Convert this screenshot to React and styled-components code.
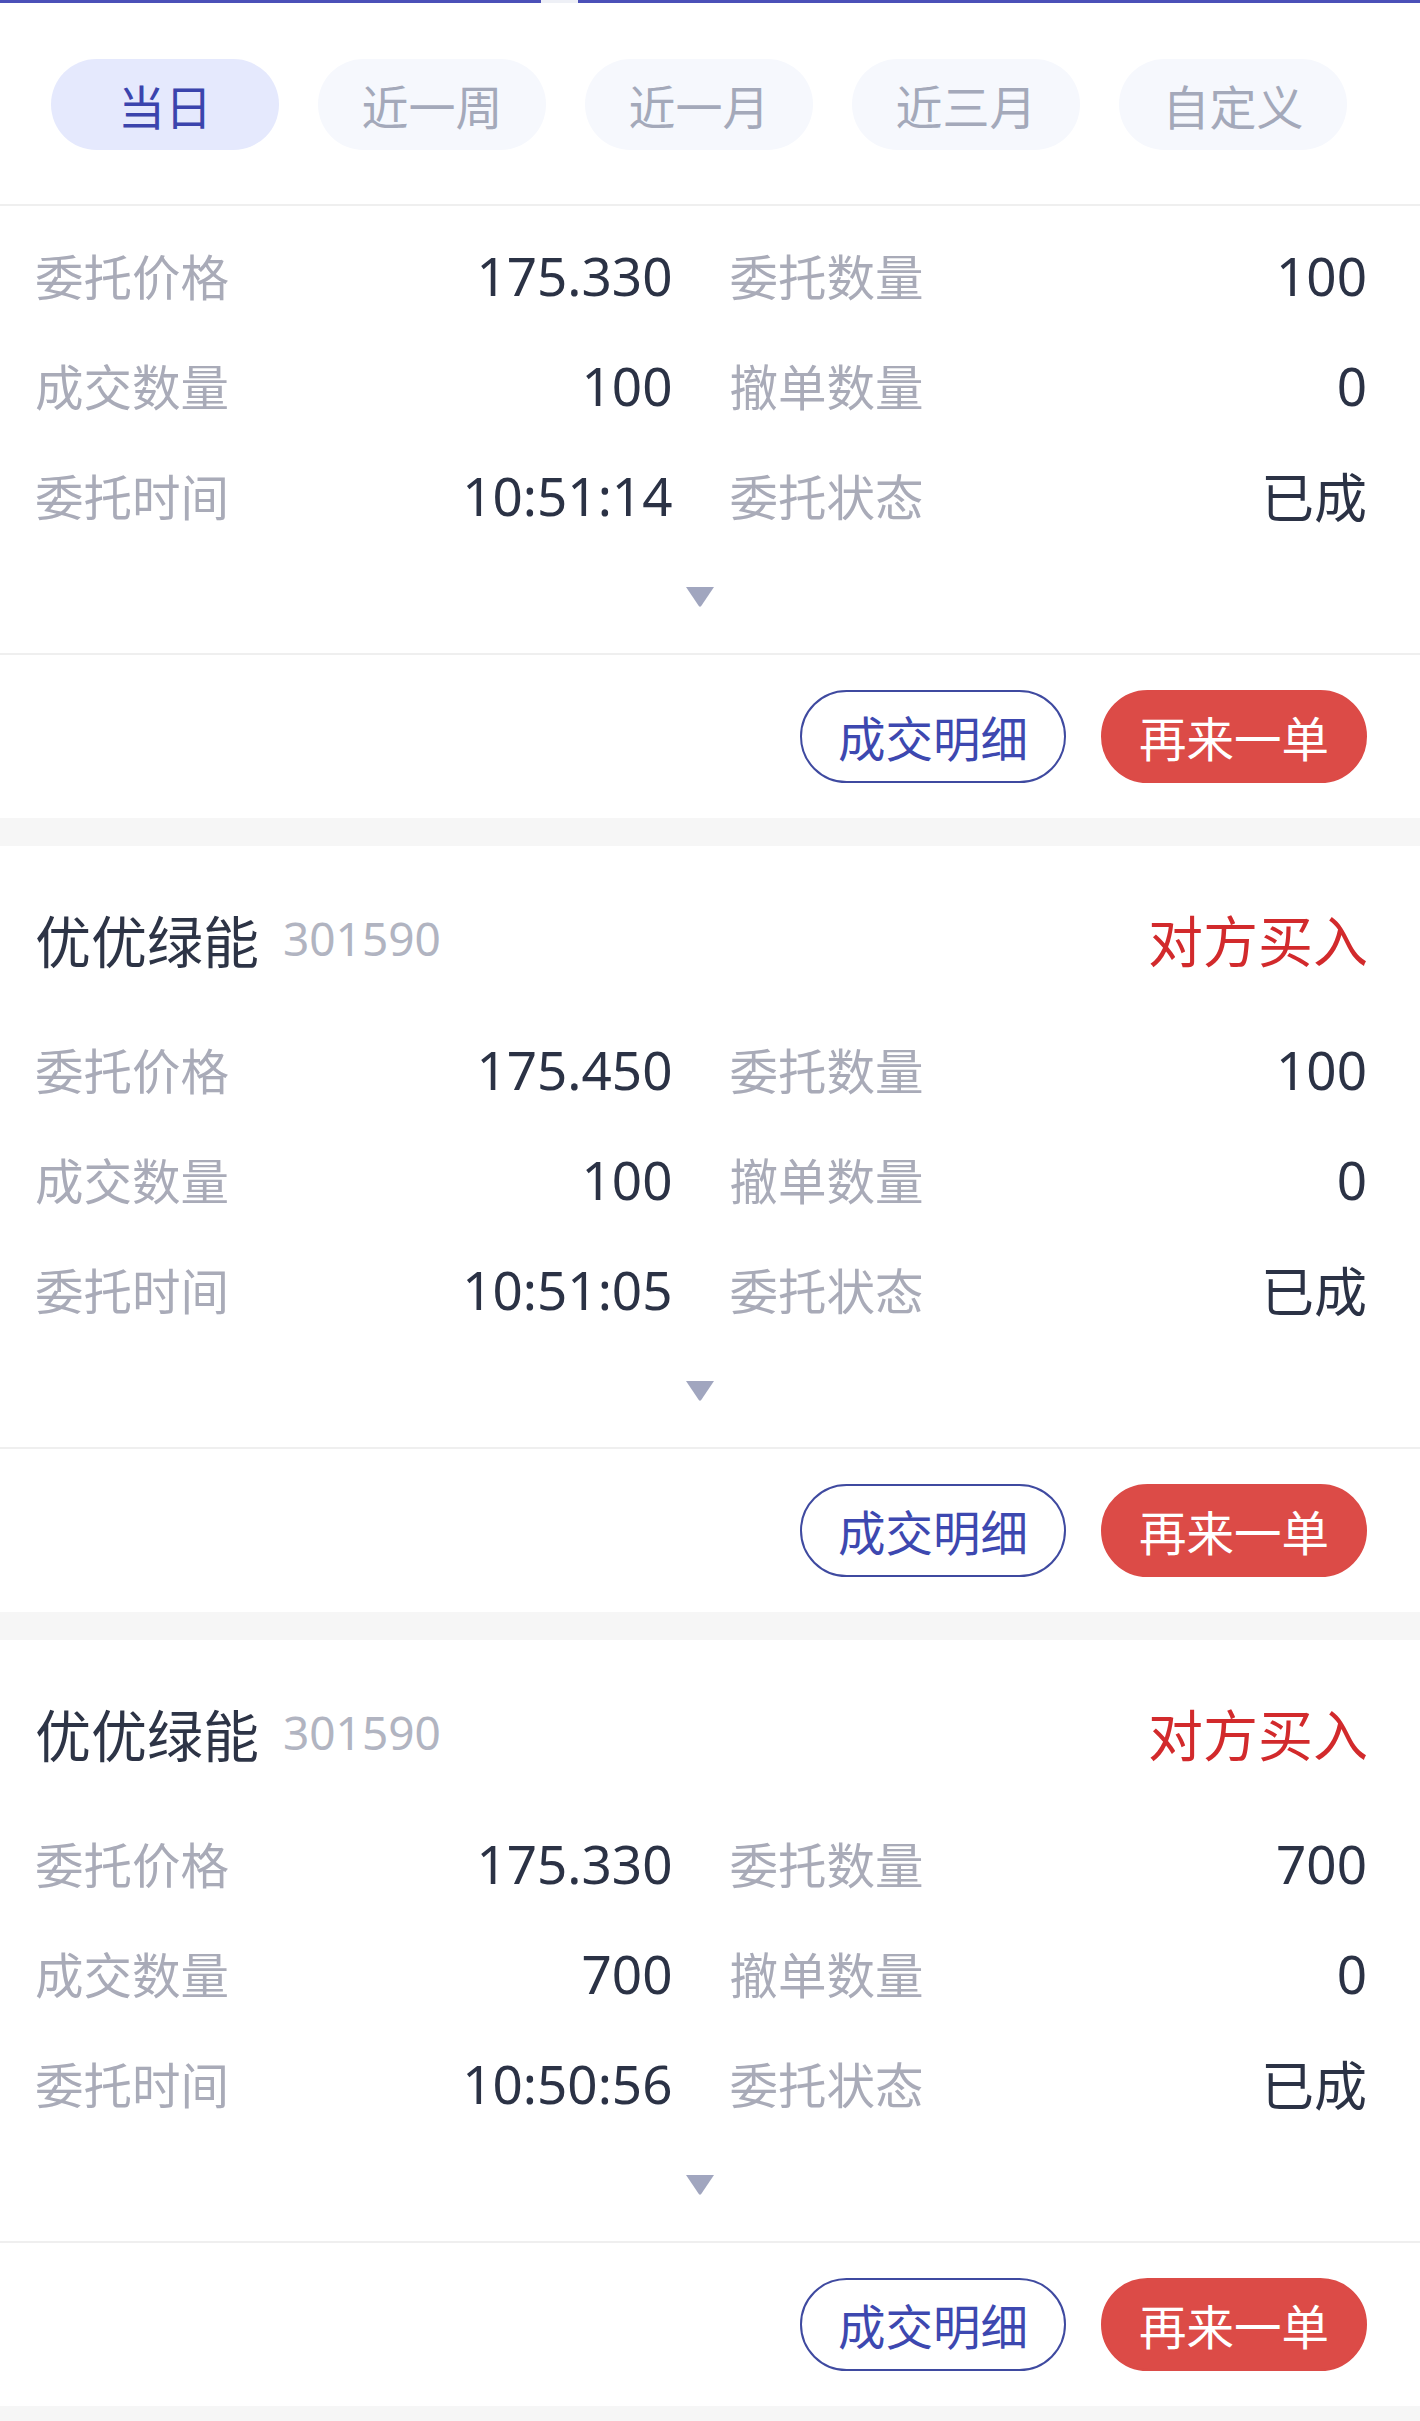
import styled, { createGlobalStyle } from "styled-components";

const GlobalStyle = createGlobalStyle`
  html, body {
    margin: 0;
    padding: 0;
    background: #f6f6f6;
  }
  body {
    font-family: "Noto Sans", "Noto Sans CJK SC", sans-serif;
  }
`;

const tabs = ["当日", "近一周", "近一月", "近三月", "自定义"];

const orders = [
  {
    id: 1,
    noHeader: true,
    price: "175.330",
    qty: "100",
    dealQty: "100",
    cancelQty: "0",
    time: "10:51:14",
    status: "已成",
  },
  {
    id: 2,
    name: "优优绿能",
    code: "301590",
    side: "对方买入",
    price: "175.450",
    qty: "100",
    dealQty: "100",
    cancelQty: "0",
    time: "10:51:05",
    status: "已成",
  },
  {
    id: 3,
    name: "优优绿能",
    code: "301590",
    side: "对方买入",
    price: "175.330",
    qty: "700",
    dealQty: "700",
    cancelQty: "0",
    time: "10:50:56",
    status: "已成",
  },
];

const Page = styled.div`
  width: 1420px;
  min-height: 2421px;
  background: #f6f6f6;
`;

const TopBar = styled.div`
  display: flex;
  height: 3px;
  background: #ffffff;
`;

const TopBarSeg = styled.div`
  height: 3px;
  background: ${(p) => (p.$gap ? "#eef0f6" : "#4b50b8")};
  width: ${(p) => (p.$w ? `${p.$w}px` : "auto")};
  flex: ${(p) => (p.$w ? "none" : "1")};
`;

const TabBar = styled.div`
  display: flex;
  gap: 39px;
  padding: 56px 0 54px 51px;
  background: #ffffff;
  border-bottom: 2px solid #efefef;
`;

const Tab = styled.div`
  width: 228px;
  height: 91px;
  border-radius: 46px;
  display: flex;
  align-items: center;
  justify-content: center;
  font-family: "Noto Sans CJK SC", sans-serif;
  font-size: 47px;
  color: ${(p) => (p.$active ? "#3b44ad" : "#a4a9ba")};
  background: ${(p) => (p.$active ? "#e5e9fd" : "#f6f8fd")};
`;

const Card = styled.div`
  background: #ffffff;
  margin-bottom: 28px;
`;

const Header = styled.div`
  display: flex;
  align-items: center;
  height: 60px;
  padding: 62px 52px 32px 35px;
`;

const Name = styled.span`
  font-family: "Noto Sans CJK SC", sans-serif;
  font-size: 56px;
  color: #2d3446;
`;

const Code = styled.span`
  margin-left: 24px;
  font-size: 46px;
  color: #b1b4c1;
`;

const Side = styled.span`
  margin-left: auto;
  font-family: "Noto Sans CJK SC", sans-serif;
  font-size: 55px;
  color: #d22a2c;
`;

const Grid = styled.div`
  display: grid;
  grid-template-columns: 1fr 1fr;
  column-gap: 57px;
  padding: 14px 53px 0 35px;
`;

const Cell = styled.div`
  display: flex;
  align-items: center;
  justify-content: space-between;
  height: 110px;
`;

const Label = styled.span`
  font-family: "Noto Sans CJK SC", sans-serif;
  font-size: 48.5px;
  color: #a9abb8;
`;

const Value = styled.span`
  font-size: 53px;
  color: #2b3245;
`;

const Expand = styled.div`
  display: flex;
  justify-content: center;
  padding: 37px 56px 46px 35px;
  border-bottom: 2px solid #efefef;
`;

const Footer = styled.div`
  display: flex;
  justify-content: flex-end;
  gap: 35px;
  padding: 35px 53px 35px 0;
`;

const Button = styled.button`
  box-sizing: border-box;
  width: 266px;
  height: 93px;
  border-radius: 47px;
  font-family: "Noto Sans CJK SC", sans-serif;
  font-size: 47.5px;
  padding: 0;
  cursor: pointer;
  border: 2px solid ${(p) => (p.$primary ? "#dc4b47" : "#3f4aa0")};
  background: ${(p) => (p.$primary ? "#dc4b47" : "#ffffff")};
  color: ${(p) => (p.$primary ? "#ffffff" : "#3d48b0")};
`;

const Arrow = () => (
  <svg width="30" height="20" viewBox="0 0 30 20">
    <path d="M1 0 H29 L16.2 19 Q15 20.5 13.8 19 Z" fill="#a1a6bf" />
  </svg>
);

const OrderCard = ({ order }) => {
  const rows = [
    ["委托价格", order.price, "委托数量", order.qty],
    ["成交数量", order.dealQty, "撤单数量", order.cancelQty],
    ["委托时间", order.time, "委托状态", order.status],
  ];
  return (
    <Card>
      {!order.noHeader && (
        <Header>
          <Name>{order.name}</Name>
          <Code>{order.code}</Code>
          <Side>{order.side}</Side>
        </Header>
      )}
      <Grid>
        {rows.map((r) => [
          <Cell key={r[0]}>
            <Label>{r[0]}</Label>
            <Value>{r[1]}</Value>
          </Cell>,
          <Cell key={r[2]}>
            <Label>{r[2]}</Label>
            <Value>{r[3]}</Value>
          </Cell>,
        ])}
      </Grid>
      <Expand>
        <Arrow />
      </Expand>
      <Footer>
        <Button>成交明细</Button>
        <Button $primary>再来一单</Button>
      </Footer>
    </Card>
  );
};

export default function App() {
  return (
    <Page>
      <GlobalStyle />
      <TopBar>
        <TopBarSeg $w={541} />
        <TopBarSeg $w={37} $gap />
        <TopBarSeg />
      </TopBar>
      <TabBar>
        {tabs.map((t, i) => (
          <Tab key={t} $active={i === 0}>
            {t}
          </Tab>
        ))}
      </TabBar>
      {orders.map((o) => (
        <OrderCard key={o.id} order={o} />
      ))}
    </Page>
  );
}
